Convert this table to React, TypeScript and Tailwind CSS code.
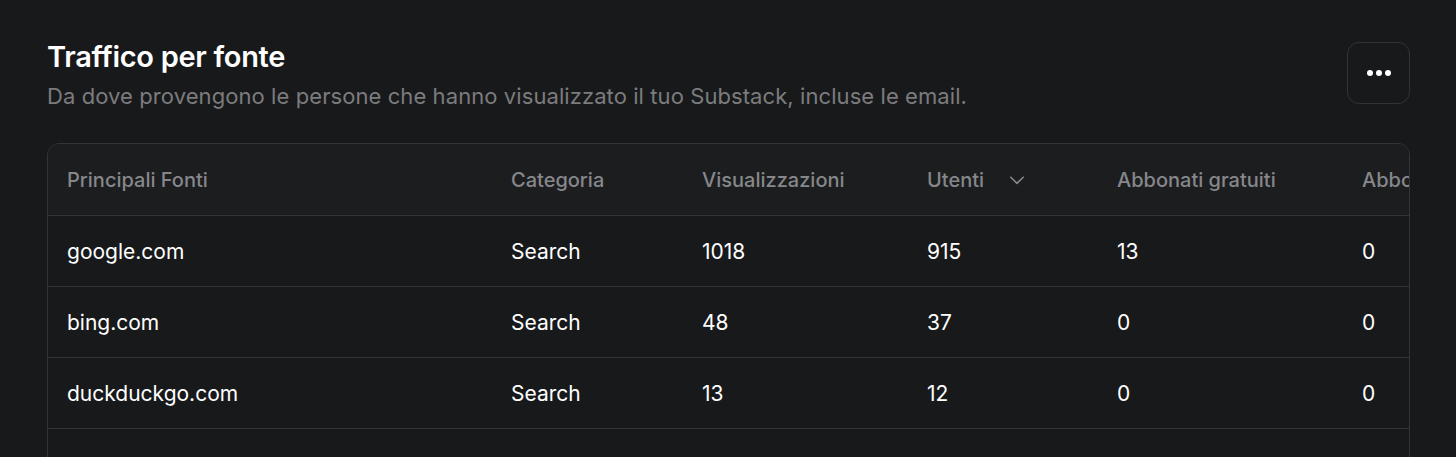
import React from "react";

const rows = [
  ["google.com", "Search", "1018", "915", "13", "0"],
  ["bing.com", "Search", "48", "37", "0", "0"],
  ["duckduckgo.com", "Search", "13", "12", "0", "0"],
  ["", "", "", "", "", ""],
];

const widths = ["w-[444px]", "w-[191px]", "w-[225px]", "w-[190px]", "w-[245px]", "w-[200px]"];

export default function App() {
  return (
    <div
      className="w-[1456px] h-[457px] overflow-hidden bg-[#18191b] pl-[47px] pr-[46px] pt-[39px]"
      style={{ fontFamily: "Inter, 'Noto Sans', sans-serif" }}
    >
      <div className="flex justify-between items-start">
        <div>
          <h1 className="text-[29px] leading-[36px] font-semibold text-white tracking-[-0.3px]">Traffico per fonte</h1>
          <p className="mt-[7px] text-[22px] leading-[28px] text-[#7c7c7e] tracking-[0.08px]">
            Da dove provengono le persone che hanno visualizzato il tuo Substack, incluse le email.
          </p>
        </div>
        <button className="mt-[3px] w-[63px] h-[62px] rounded-[12px] border border-[#323336] flex items-center justify-center gap-[3px]">
          <span className="w-[6px] h-[6px] rounded-full bg-white" />
          <span className="w-[6px] h-[6px] rounded-full bg-white" />
          <span className="w-[6px] h-[6px] rounded-full bg-white" />
        </button>
      </div>
      <div className="mt-[33px] border border-[#333437] rounded-t-[12px] overflow-hidden">
        <table className="table-fixed border-collapse w-[1495px]">
          <thead>
            <tr className="bg-[#1c1d1f] h-[71px] border-b border-[#333437]">
              {["Principali Fonti", "Categoria", "Visualizzazioni", "Utenti", "Abbonati gratuiti", "Abbonati a pagamento"].map((h, i) => (
                <th key={i} className={`${widths[i]} pl-[19px] pr-[20px] pt-[2px] text-left text-[20px] font-medium text-[#86878a] whitespace-nowrap`}>
                  {i === 3 ? (
                    <span className="flex items-center gap-[24px]">
                      Utenti
                      <svg width="18" height="18" viewBox="0 0 16 16" fill="none" stroke="#86878a" strokeWidth="1.4" strokeLinecap="round" strokeLinejoin="round">
                        <path d="M2.5 5.5l5.5 5.5 5.5-5.5" />
                      </svg>
                    </span>
                  ) : (
                    h
                  )}
                </th>
              ))}
            </tr>
          </thead>
          <tbody>
            {rows.map((r, ri) => (
              <tr key={ri} className="h-[71px] border-b border-[#333437]">
                {r.map((c, ci) => (
                  <td key={ci} className="pl-[19px] pr-[20px] pt-[2px] text-[21px] text-white whitespace-nowrap">
                    {c}
                  </td>
                ))}
              </tr>
            ))}
          </tbody>
        </table>
      </div>
    </div>
  );
}
